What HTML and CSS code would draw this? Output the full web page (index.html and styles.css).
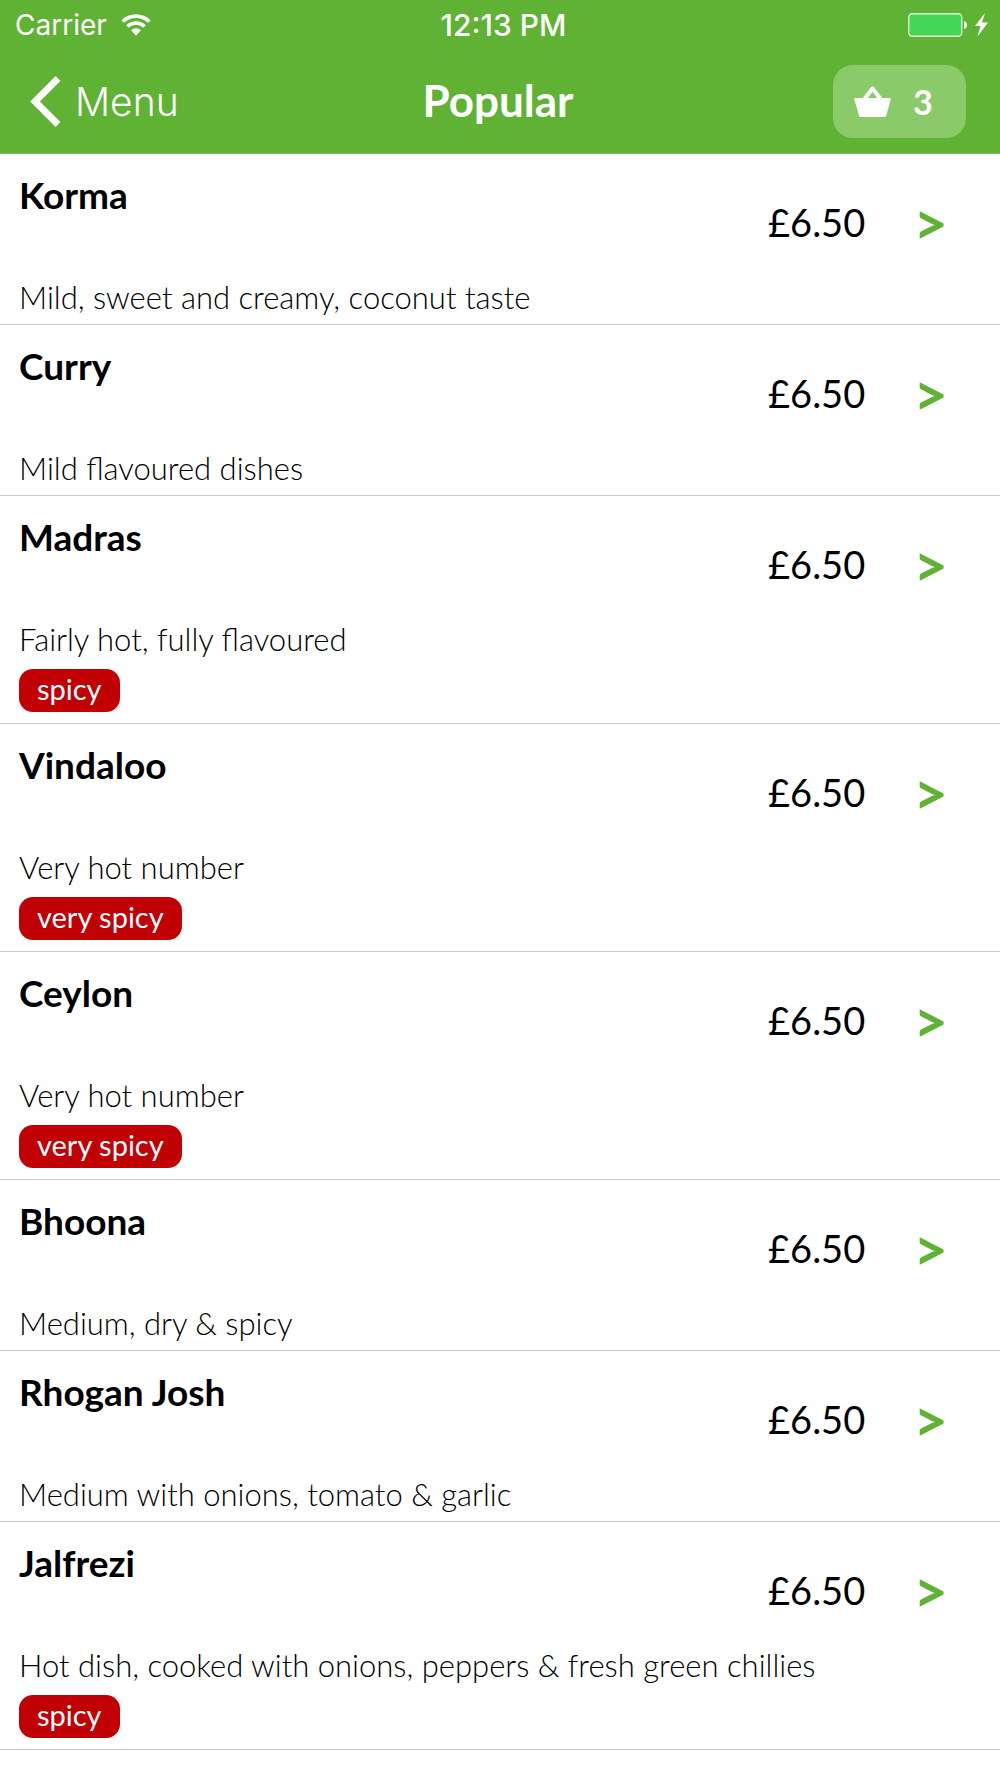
FILE: index.html
```html
<!DOCTYPE html>
<html lang="en">
<head>
<meta charset="utf-8">
<meta name="viewport" content="width=device-width, initial-scale=1">
<title>Popular</title>
<link rel="stylesheet" href="styles.css">
</head>
<body>
<header class="header">
  <div class="status">
    <div class="status-left">
      <span>Carrier</span>
      <svg class="wifi" viewBox="0 0 30 22" aria-hidden="true">
        <path d="M0.400 6.200A21 21 0 0 1 29.600 6.200L27 8.800A17.300 17.300 0 0 0 3 8.800Z"/>
        <path d="M5.200 11.200A14 14 0 0 1 24.800 11.200L22.200 13.800A10.300 10.300 0 0 0 7.800 13.800Z"/>
        <path d="M10 16.200A7.200 7.200 0 0 1 20 16.200L15 21.500Z"/>
      </svg>
    </div>
    <time class="status-time">12:13 PM</time>
    <div class="status-right">
      <svg class="battery" viewBox="0 0 80 24" aria-hidden="true">
        <rect x="0.750" y="0.750" width="53" height="22.500" rx="3.500" fill="#44d754" stroke="#e4f4da" stroke-width="1.300"/>
        <path d="M56 8q3 1 3 4t-3 4z" fill="#fff"/>
        <path d="M77 0L67 13h5.500L69.500 23.500L80 9.500h-6z" fill="#fff"/>
      </svg>
    </div>
  </div>
  <nav class="navbar">
    <a class="back" href="#menu">
      <svg class="back-icon" viewBox="0 0 31 51" aria-hidden="true"><path d="M28 2.500L5 25.500L28 48.500" fill="none" stroke="#fff" stroke-width="6.800"/></svg>
      <span>Menu</span>
    </a>
    <h1 class="title">Popular</h1>
    <button class="basket" type="button" aria-label="Basket, 3 items">
      <svg class="basket-icon" viewBox="0 0 37 32" aria-hidden="true">
        <path d="M10.500 13L18.500 2.500L26.500 13" fill="none" stroke="#fff" stroke-width="4" stroke-linejoin="round"/>
        <path d="M1.200 12H35.800Q37 12 36.700 13.500L32.300 29.500Q31.800 31 30.300 31H7.200Q5.500 31 5 29.500L0.300 13.500Q0 12 1.200 12Z" fill="#fff"/>
      </svg>
      <span>3</span>
    </button>
  </nav>
</header>
<main>
  <ul class="dishes">
    <li><a class="dish" href="#korma"><div class="info"><h2 class="name">Korma</h2><p class="desc">Mild, sweet and creamy, coconut taste</p></div><span class="price">£6.50</span><span class="arrow">&gt;</span></a></li>
    <li><a class="dish" href="#curry"><div class="info"><h2 class="name">Curry</h2><p class="desc">Mild flavoured dishes</p></div><span class="price">£6.50</span><span class="arrow">&gt;</span></a></li>
    <li><a class="dish" href="#madras"><div class="info"><h2 class="name">Madras</h2><p class="desc">Fairly hot, fully flavoured</p><span class="tag">spicy</span></div><span class="price">£6.50</span><span class="arrow">&gt;</span></a></li>
    <li><a class="dish" href="#vindaloo"><div class="info"><h2 class="name">Vindaloo</h2><p class="desc">Very hot number</p><span class="tag">very spicy</span></div><span class="price">£6.50</span><span class="arrow">&gt;</span></a></li>
    <li><a class="dish" href="#ceylon"><div class="info"><h2 class="name">Ceylon</h2><p class="desc">Very hot number</p><span class="tag">very spicy</span></div><span class="price">£6.50</span><span class="arrow">&gt;</span></a></li>
    <li><a class="dish" href="#bhoona"><div class="info"><h2 class="name">Bhoona</h2><p class="desc">Medium, dry &amp; spicy</p></div><span class="price">£6.50</span><span class="arrow">&gt;</span></a></li>
    <li><a class="dish" href="#rhogan-josh"><div class="info"><h2 class="name">Rhogan Josh</h2><p class="desc">Medium with onions, tomato &amp; garlic</p></div><span class="price">£6.50</span><span class="arrow">&gt;</span></a></li>
    <li><a class="dish" href="#jalfrezi"><div class="info"><h2 class="name">Jalfrezi</h2><p class="desc">Hot dish, cooked with onions, peppers &amp; fresh green chillies</p><span class="tag">spicy</span></div><span class="price">£6.50</span><span class="arrow">&gt;</span></a></li>
  </ul>
</main>
</body>
</html>
```
FILE: styles.css
```css
* { box-sizing: border-box; }

body {
  margin: 0;
  background: #fff;
  color: #000;
  font-family: Lato, sans-serif;
}

h1, h2, p, ul { margin: 0; padding: 0; }
ul { list-style: none; }
a { color: inherit; text-decoration: none; }
svg { display: block; }

.header {
  background: #5fb234;
  color: #fff;
  border-bottom: 1px solid #7cc058;
}

.status {
  display: grid;
  grid-template-columns: 1fr auto 1fr;
  align-items: center;
  height: 50px;
  padding: 0 12px 0 15px;
  font: 400 28px/32px Inter, sans-serif;
}
.status-left { display: flex; align-items: center; gap: 14px; }
.status-time { padding-left: 4px; font-size: 30px; font-weight: 500; }
.status-right { display: flex; justify-content: flex-end; }
.wifi { width: 30px; height: 22px; fill: #fff; }
.battery { width: 80px; height: 24px; }

.navbar {
  display: grid;
  grid-template-columns: 1fr auto 1fr;
  align-items: center;
  height: 103px;
  padding: 0 34px 0 30px;
}
.back {
  display: flex;
  align-items: center;
  gap: 14px;
  font: 300 39px/48px Inter, sans-serif;
}
.back-icon { width: 31px; height: 51px; }
.title { padding-bottom: 4px; font-size: 44px; line-height: 52px; font-weight: 700; }
.basket {
  justify-self: end;
  display: flex;
  align-items: center;
  gap: 22px;
  width: 133px;
  height: 73px;
  padding: 0 21px;
  border: 0;
  border-radius: 20px;
  background: #8aca69;
  color: #fff;
  font: 700 34px/40px Lato, sans-serif;
}
.basket-icon { width: 37px; height: 32px; }

.dish {
  display: flex;
  align-items: flex-start;
  padding: 19px 52px 7px 19px;
  border-bottom: 1px solid #ccc;
}
.info { flex: 1; min-width: 0; display: flex; flex-direction: column; align-items: flex-start; }
.name { margin-bottom: 60px; font-size: 37px; line-height: 44px; font-weight: 700; }
.desc { font-size: 31px; line-height: 40px; font-weight: 300; white-space: nowrap; }
.tag {
  margin: 10px 0 4px;
  padding: 0 18px 4px;
  border-radius: 14px;
  background: #c00004;
  color: #fff;
  font-size: 29px;
  line-height: 39px;
}
.price { margin-top: 25px; font-size: 38px; line-height: 48px; }
.arrow {
  margin: 25px 0 0 48px;
  color: #5fb234;
  font-size: 60px;
  line-height: 48px;
  font-weight: 700;
}
```
